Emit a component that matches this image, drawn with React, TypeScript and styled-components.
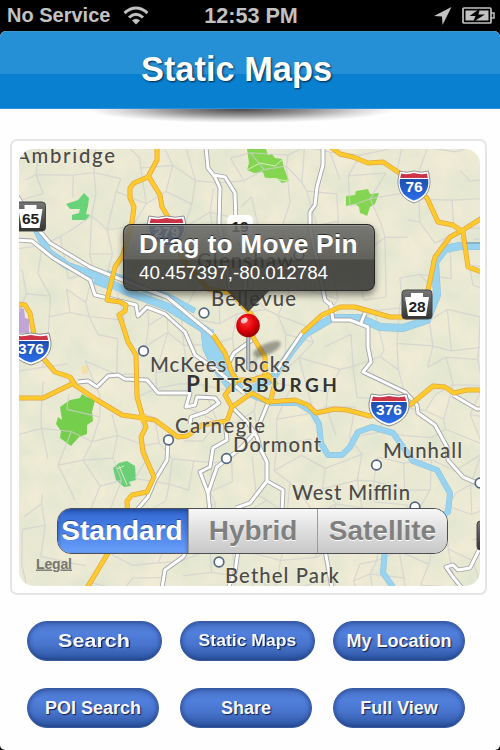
import { useState } from "react";
import styled, { createGlobalStyle } from "styled-components";

const GlobalStyle = createGlobalStyle`
  body {
    margin: 0;
    background: #000;
    font-family: "Liberation Sans", Arial, sans-serif;
  }
`;

// major highways
const highways = [
  "M157 146V160L148 177L134 183L130 188V198L134 207L132 222L123 255L115 267L107 300L120 302L126 305L125 311L119 315L122 323L128 342L136 355L137 397L143 418L146 427L141 437L143 452L154 477L147 492L132 495L127 501L128 520L108 553L87 588",
  "M149 177L160 195L162 207L170 220L182 258L208 289L230 293L252 315L253 337L265 357V380",
  "M17 304L25 305L30 313L35 340L43 358L55 372L70 377L76 386L97 400L122 415L143 418L155 420L178 437L187 436L202 425L227 421L232 407L252 393L268 402L295 400L308 405L316 413L335 409L347 410L370 416L389 413L410 405L433 386L445 387L454 393L467 390H482",
  "M17 398H43L74 383",
  "M213 335L225 353L232 373L237 380H252L268 375L275 383L270 403",
  "M237 380L225 395L232 407",
  "M302 333L322 315L340 307H355L390 317H415L428 290L435 257L450 237L463 230L482 218",
  "M331 147L340 154L353 157L368 163L383 162L398 172L427 198L438 222L453 225L463 232L468 267L482 272",
];

// secondary roads, white with a grey casing
const roads = [
  "M17 240L32 241L53 258L90 280L95 295L108 298L136 305L138 316L147 307L165 314L185 332L195 355L218 371L244 393",
  "M17 196L37 228L50 243L90 267L120 279L167 297L213 335",
  "M78 382L88 381L97 387L108 376L118 375L125 379L147 380L158 393H170L190 393L186 407L195 405L197 397L215 398L219 403L206 412L191 417L190 424",
  "M206 147L208 168L215 177L220 188L219 223L225 255L230 290",
  "M213 175L225 177L235 193L236 225L246 260L245 290",
  "M323 147V165L317 187L315 205L310 212V228L317 260L323 290L325 300L333 307",
  "M330 302L333 320H350L368 327V347L371 362L363 372L405 392L417 405L418 413L435 425L447 447L448 460L463 477L477 483",
  "M365 313L361 323",
  "M453 395L477 409H482",
  "M302 333L275 373",
  "M252 340L234 353L228 364",
  "M232 407L248 423L257 437L260 448L267 462V481L250 503L236 508",
  "M268 403L257 430L242 447L217 467L208 493",
  "M267 481L283 490L282 512",
  "M225 421L227 440L213 448L210 467L200 472L208 493L210 512",
  "M168 440L167 460L155 480L148 497L136 511",
  "M187 550L183 557L165 570L162 588",
  "M238 550L235 573L228 588",
  "M325 550L332 588",
  "M480 548L470 568L458 570L453 565L446 567L453 577L462 588",
];

const rivers = [
  { d: "M37 230L48 252L68 266L94 275L128 292L168 307L207 331L217 349L232 375L240 389", w: 7 },
  { d: "M94 281L113 288M107 273L128 280L145 290L168 296L195 311", w: 5 },
  { d: "M207 330L209 348L217 365L233 387", w: 12 },
  { d: "M245 393L272 379L292 350L305 334L332 318L360 318L380 327L403 328L427 320L437 295L435 262L445 249L460 246H482", w: 7 },
  { d: "M246 393L272 403L298 403L312 412L319 424L321 443L328 455H342L350 447L358 432L372 427L393 433L413 461L437 470L450 493L448 512L385 548L383 573L393 587", w: 5 },
];

const parks = [
  { d: "M247 149L266 149L268 155L272 154L275 158L282 159L284 168L289 181L282 183L277 178L265 178L263 172L254 173L247 170L249 163Z", fill: "#84d552" },
  { d: "M346 196L355 195L356 191L362 190L368 189L370 194L379 193L375 204L370 207L367 216L363 214L360 213L359 207L355 204L346 206Z", fill: "#84d552" },
  { d: "M70 400L80 398L82 394L87 397L95 400L92 412L93 421L87 425L87 434L79 437L71 446L60 438L61 431L56 424L58 417L62 420L60 407Z", fill: "#76cf4c" },
  { d: "M66 204L78 200L84 193L89 198L88 206L86 214L90 215L86 220L72 220L72 215L79 213L80 209L70 209Z", fill: "#69d379" },
  { d: "M113 468L119 463L127 461L135 466L136 480L129 482L131 486L124 487L116 480Z", fill: "#6bcf78" },
];

const towns = [
  [204, 313], [143.5, 351], [168.5, 440], [226.5, 458.5], [376.5, 465],
  [415, 507], [219, 562], [480, 483], [299, 255],
];

const labels = [
  { text: "Ambridge", x: 16, y: 163, w: 99 },
  { text: "Glenshaw", x: 197, y: 268, w: 96 },
  { text: "Bellevue", x: 211, y: 306, w: 85 },
  { text: "McKees Rocks", x: 150, y: 372, w: 140 },
  { text: "Carnegie", x: 175, y: 432.5, w: 90 },
  { text: "Dormont", x: 233, y: 451.5, w: 88 },
  { text: "Munhall", x: 383, y: 458, w: 79 },
  { text: "West Mifflin", x: 292, y: 500, w: 118 },
  { text: "Bethel Park", x: 225, y: 583, w: 114 },
];

const buttons = [
  { text: "Search", width: 135, size: 18, stretch: 1.2 },
  { text: "Static Maps", width: 135, size: 16, stretch: 1.1 },
  { text: "My Location", width: 132, size: 18, stretch: 1 },
  { text: "POI Search", width: 132, size: 18, stretch: 1 },
  { text: "Share", width: 132, size: 18, stretch: 1 },
  { text: "Full View", width: 132, size: 18, stretch: 1 },
];

// local streets: a jittered grid with some of the links left out
const makeStreets = () => {
  const rand = (a: number, b: number) => {
    const n = Math.sin(a * 127.1 + b * 311.7) * 43758.5453;
    return n - Math.floor(n);
  };
  const point = (i: number, j: number) =>
    `${(10 + i * 24 + rand(i, j) * 19).toFixed(1)} ${(140 + j * 24 + rand(j + 40, i) * 19).toFixed(1)}`;
  let d = "";
  for (let i = 0; i < 20; i++) {
    for (let j = 0; j < 19; j++) {
      if (rand(i + 9, j + 3) > 0.35) d += `M${point(i, j)}L${point(i + 1, j)}`;
      if (rand(i + 5, j + 71) > 0.35) d += `M${point(i, j)}L${point(i, j + 1)}`;
    }
  }
  return d;
};
const streets = makeStreets();

const Interstate = ({ x, y, w, text }: { x: number; y: number; w: number; text: string }) => (
  <g transform={`translate(${x} ${y})`}>
    <g transform={`scale(${w / 40} 1)`}>
      <path
        d="M2 0Q11 2.5 20 0Q29 2.5 38 0L40 9C41 21 32 29 20 32C8 29 -1 21 0 9Z"
        fill="#fff"
        stroke="#8c8c92"
        strokeWidth="1"
      />
      <path d="M4 2.5Q12 4 20 2Q28 4 36 2.5L37.3 7H2.7Z" fill="#cc3548" />
      <path d="M2.3 8H37.7C39.5 20 31 26.5 20 29.5C9 26.5 0.5 20 2.3 8Z" fill="url(#shield)" />
    </g>
    <ShieldText x={w / 2} y={21} fill="#fff">{text}</ShieldText>
  </g>
);

const StateRoute = ({ x, y, text }: { x: number; y: number; text: string }) => (
  <g transform={`translate(${x} ${y})`}>
    <rect width="30" height="29" rx="3.5" fill="url(#stateRoute)" stroke="#454545" />
    <path d="M9 3H21V7H27L24 26H6L3 7H9Z" fill="#fff" />
    <ShieldText x={15} y={21.5} fill="#222">{text}</ShieldText>
  </g>
);

const MapDrawing = () => (
  <MapSvg viewBox="19 149 461 437">
    <defs>
      <linearGradient id="shield" x1="0" y1="0" x2="0" y2="1">
        <stop offset="0" stopColor="#1f4fae" />
        <stop offset="1" stopColor="#2a6eea" />
      </linearGradient>
      <linearGradient id="stateRoute" x1="0" y1="0" x2="0" y2="1">
        <stop offset="0" stopColor="#777" />
        <stop offset="1" stopColor="#333" />
      </linearGradient>
      <linearGradient id="stem">
        <stop offset="0" stopColor="#777c84" />
        <stop offset="0.5" stopColor="#d0d5da" />
        <stop offset="1" stopColor="#777c84" />
      </linearGradient>
      <radialGradient id="pinHead" cx="0.42" cy="0.35" r="0.65">
        <stop offset="0" stopColor="#ff3434" />
        <stop offset="0.6" stopColor="#dc0008" />
        <stop offset="1" stopColor="#960006" />
      </radialGradient>
      <filter id="terrain" x="0" y="0" width="1" height="1" colorInterpolationFilters="sRGB">
        <feTurbulence type="fractalNoise" baseFrequency="0.035" numOctaves="4" seed="7" />
        <feColorMatrix values="0.3 0 0 0 0.765  0.1 0 0 0 0.87  0.1 0 0 0 0.78  0 0 0 0 1" />
      </filter>
      <filter id="soft">
        <feGaussianBlur stdDeviation="1.8" />
      </filter>
    </defs>
    <rect x="19" y="149" width="461" height="437" fill="#eae9d3" />
    <rect x="19" y="149" width="461" height="437" filter="url(#terrain)" opacity="0.35" />
    <path d="M19 307L24 309L25 318L29 319V333H19Z" fill="#c2a5d4" />
    {parks.map((park) => (
      <path key={park.d} d={park.d} fill={park.fill} />
    ))}
    <path d="M119 466L127 485M117 469L124 466M247 170L260 163L275 166L282 160M265 178L289 181" fill="none" stroke="#d4efb8" strokeWidth="1" />
    <path d="M82 366H88V374H82Z" fill="#f7dfa4" />
    <path d={streets} fill="none" stroke="#d0cfd0" strokeWidth="1.2" opacity="0.75" />
    {rivers.map((river) => (
      <Line key={river.d} d={river.d} stroke="#8fc3dc" strokeWidth={river.w + 1} />
    ))}
    {rivers.map((river) => (
      <Line key={river.d} d={river.d} stroke="#98d3f0" strokeWidth={river.w} />
    ))}
    {roads.map((d) => (
      <Line key={d} d={d} stroke="#a3a6a8" strokeWidth={4.8} />
    ))}
    {roads.map((d) => (
      <Line key={d} d={d} stroke="#fff" strokeWidth={3} />
    ))}
    {highways.map((d) => (
      <Line key={d} d={d} stroke="#e2a440" strokeWidth={5} />
    ))}
    {highways.map((d) => (
      <Line key={d} d={d} stroke="#ffcb2c" strokeWidth={3.6} />
    ))}
    <circle cx="143" cy="418" r="4" fill="#ffcb2c" />
    <path d="M466 243H480" stroke="#85949c" />

    {towns.map(([x, y]) => (
      <circle key={`${x}-${y}`} cx={x} cy={y} r="4.8" fill="#fff" stroke="#526781" strokeWidth="1.7" />
    ))}
    <StateRoute x={15.5} y={202} text="65" />
    <StateRoute x={402} y={290} text="28" />
    <StateRoute x={477} y={521} text="" />
    <rect x="227" y="215" width="26" height="25" rx="5" fill="#fff" />
    <ShieldText x={240} y={231.5} fill="#222">19</ShieldText>
    <Interstate x={147} y={216} w={39} text="279" />
    <Interstate x={398} y={171} w={32} text="76" />
    <Interstate x={11} y={333} w={40} text="376" />
    <Interstate x={369} y={394} w={40} text="376" />

    {labels.map((label) => (
      <TownLabel key={label.text} x={label.x} y={label.y} textLength={label.w}>
        {label.text}
      </TownLabel>
    ))}
    <CityLabel x="186" y="391.5" textLength="151">
      <tspan fontSize="22.5">P</tspan>ITTSBURGH
    </CityLabel>
    <LegalText x="36" y="568.5" textLength="36">Legal</LegalText>

    <path d="M250 367L260 354" stroke="#555" strokeWidth="2" opacity="0.35" filter="url(#soft)" />
    <ellipse cx="267" cy="349" rx="15" ry="5.5" transform="rotate(-24 267 349)" fill="#333" opacity="0.42" filter="url(#soft)" />
    <rect x="246.2" y="334" width="4" height="36" rx="1" fill="url(#stem)" />
    <circle cx="248" cy="325.5" r="11.8" fill="url(#pinHead)" />
    <ellipse cx="244" cy="320.5" rx="3.6" ry="2.6" transform="rotate(-30 244 320)" fill="#fff" opacity="0.75" />
  </MapSvg>
);

const App = () => {
  // 0: Standard, 1: Hybrid, 2: Satellite
  const [mapType, setMapType] = useState(0);

  return (
    <Screen>
      <GlobalStyle />
      <StatusBar>
        <Carrier>
          No Service
          <svg width="26" height="19" viewBox="0 0 26 19" fill="none" stroke="#c2c2c2" strokeWidth="3">
            <path d="M1.5 7Q13 -3 24.5 7M6 11.5Q13 5 20 11.5" />
            <path d="M9 14.5Q13 11 17 14.5L13 18.5Z" fill="#c2c2c2" stroke="none" />
          </svg>
        </Carrier>
        <Clock>12:53 PM</Clock>
        <StatusIcons>
          <svg width="18" height="18" viewBox="0 0 18 18">
            <path d="M17.5 0L8.5 18L8 9.5L0 9Z" fill="#c2c2c2" />
          </svg>
          <svg width="33" height="17" viewBox="0 0 33 17">
            <rect x="1" y="1" width="28" height="15" rx="1" fill="none" stroke="#c2c2c2" strokeWidth="1.7" />
            <path d="M29 6H32V11H29" fill="none" stroke="#c2c2c2" strokeWidth="1.5" />
            <rect x="3.5" y="3.5" width="23" height="10" fill="#c2c2c2" />
            <path d="M18 1.5L7.5 9H13.5L11 15L23 7.5H16.5Z" fill="#080808" />
          </svg>
        </StatusIcons>
      </StatusBar>
      <Page>
        <Header>
          <Title>Static Maps</Title>
        </Header>
        <HeaderShadow />
        <MapCard>
          <MapFrame>
            <MapDrawing />
            <Callout>
              <CalloutTitle>Drag to Move Pin</CalloutTitle>
              <Coordinates>40.457397,-80.012784</Coordinates>
            </Callout>
            <Segments>
              {["Standard", "Hybrid", "Satellite"].map((name, i) => (
                <Segment key={name} $active={mapType === i} onClick={() => setMapType(i)}>
                  {name}
                </Segment>
              ))}
            </Segments>
          </MapFrame>
        </MapCard>
        <ButtonGrid>
          {buttons.map((button) => (
            <PillButton key={button.text} $width={button.width} $size={button.size}>
              <ButtonText $stretch={button.stretch}>{button.text}</ButtonText>
            </PillButton>
          ))}
        </ButtonGrid>
      </Page>
    </Screen>
  );
};

const Screen = styled.div`
  width: 500px;
  height: 750px;
  overflow: hidden;
  background: #000;
`;

const StatusBar = styled.div`
  display: grid;
  grid-template-columns: 1fr auto 1fr;
  align-items: center;
  box-sizing: border-box;
  height: 31px;
  padding: 0 5px 0 7px;
  color: #c2c2c2;
  font-weight: bold;
`;

const Carrier = styled.div`
  display: flex;
  align-items: center;
  gap: 13px;
  font-size: 20px;
  white-space: nowrap;
`;

const Clock = styled.div`
  font-size: 21.6px;
`;

const StatusIcons = styled.div`
  display: flex;
  align-items: center;
  justify-content: flex-end;
  gap: 10px;
`;

const Page = styled.main`
  height: 719px;
  border-radius: 6px 6px 5px 5px;
  overflow: hidden;
  background: #fefefe;
`;

const Header = styled.header`
  display: flex;
  justify-content: center;
  box-sizing: border-box;
  height: 78px;
  padding: 17px 27px 0 0;
  border-top: 1px solid #3d94cc;
  border-bottom: 1px solid #2a92dc;
  background: linear-gradient(#2690d7 0 42px, #0a80d0 42px);
`;

const Title = styled.h1`
  margin: 0;
  color: #fff;
  font-size: 34.4px;
  line-height: 40px;
  text-shadow: 1px 1px 2px rgba(0, 25, 50, 0.9);
`;

const HeaderShadow = styled.div`
  width: 310px;
  height: 14px;
  margin-left: 86px;
  background: radial-gradient(
    ellipse 50% 100% at 50% 0,
    rgba(0, 0, 0, 0.72),
    rgba(0, 0, 0, 0.42) 45%,
    rgba(0, 0, 0, 0.14) 78%,
    transparent
  );
`;

const MapCard = styled.section`
  box-sizing: border-box;
  width: 477px;
  height: 456px;
  margin: 16px 0 0 10px;
  padding: 8px 7px;
  border: 2px solid #e5e5e5;
  border-radius: 7px;
  background: #fff;
`;

const MapFrame = styled.div`
  position: relative;
  width: 461px;
  height: 437px;
  overflow: hidden;
  border-radius: 15px;
`;

const MapSvg = styled.svg`
  display: block;
  width: 461px;
  height: 437px;
`;

const Line = styled.path`
  fill: none;
  stroke-linejoin: round;
`;

const TownLabel = styled.text`
  font-family: Lato, sans-serif;
  font-size: 20.3px;
  font-weight: 500;
  fill: #4b4a48;
  stroke: rgba(245, 243, 226, 0.6);
  stroke-width: 1.6px;
  paint-order: stroke;
`;

const CityLabel = styled(TownLabel)`
  font-size: 19px;
  font-weight: 700;
  fill: #333;
`;

const LegalText = styled.text`
  font-size: 14px;
  font-weight: bold;
  fill: #77766f;
  text-decoration: underline;
`;

const ShieldText = styled.text`
  font-size: 15.5px;
  font-weight: bold;
  text-anchor: middle;
`;

const Callout = styled.div`
  position: absolute;
  top: 75px;
  left: 104px;
  box-sizing: border-box;
  width: 252px;
  height: 67px;
  padding: 4px 0 0 15px;
  border: 1px solid rgba(30, 30, 30, 0.85);
  border-radius: 8px;
  color: #fff;
  background: linear-gradient(
    rgba(105, 105, 103, 0.88) 0,
    rgba(74, 74, 72, 0.85) 34px,
    rgba(50, 50, 48, 0.87) 35px,
    rgba(52, 52, 50, 0.87)
  );
  box-shadow: 0 4px 7px rgba(0, 0, 0, 0.45), inset 0 1px rgba(180, 180, 180, 0.5);

  &::after {
    content: "";
    position: absolute;
    top: 66px;
    left: 103px;
    width: 42px;
    height: 21px;
    background: rgba(50, 50, 48, 0.87);
    clip-path: polygon(0 0, 100% 0, 50% 100%);
  }
`;

const CalloutTitle = styled.div`
  font-size: 26.3px;
  font-weight: bold;
  line-height: 30px;
  letter-spacing: 0.25px;
  white-space: nowrap;
  text-shadow: 0 -1px rgba(0, 0, 0, 0.6);
`;

const Coordinates = styled.div`
  font-size: 18.8px;
  line-height: 28px;
`;

const Segments = styled.div`
  position: absolute;
  top: 359px;
  left: 38px;
  display: grid;
  grid-template-columns: 130px 129px 130px;
  box-sizing: border-box;
  width: 391px;
  height: 46px;
  overflow: hidden;
  border: 1px solid #4b4e54;
  border-radius: 14px;
`;

const Segment = styled.button<{ $active: boolean }>`
  padding: ${(props) => (props.$active ? "0 2px 0 0" : "0")};
  border: none;
  border-left: ${(props) => (props.$active ? "none" : "1px solid #9b9b9b")};
  background: ${(props) =>
    props.$active
      ? "linear-gradient(#3268cf, #477fe6 45%, #6aa0fa)"
      : "linear-gradient(#f7f7f7, #dedede 50%, #c8c8c8)"};
  box-shadow: ${(props) => (props.$active ? "inset 0 2px 4px rgba(15, 40, 100, 0.55)" : "none")};
  color: ${(props) => (props.$active ? "#fff" : "#808080")};
  font-family: inherit;
  font-size: 28px;
  font-weight: bold;
  text-shadow: ${(props) => (props.$active ? "0 -1px rgba(0, 0, 0, 0.4)" : "0 1px #fff")};
`;

const ButtonGrid = styled.nav`
  display: grid;
  grid-template-columns: 153px 153px 132px;
  row-gap: 27px;
  padding: 26px 0 0 27px;
`;

const PillButton = styled.button<{ $width: number; $size: number }>`
  display: flex;
  align-items: center;
  justify-content: center;
  width: ${(props) => props.$width}px;
  height: 40px;
  padding: 0;
  border: 1px solid #36599f;
  border-radius: 20px;
  background: linear-gradient(#4a73c9, #507fdc 30%, #4874cd 60%, #2d55a2);
  box-shadow: inset 0 0 5px rgba(20, 45, 110, 0.75);
  color: #f5f7ff;
  font-family: inherit;
  font-size: ${(props) => props.$size}px;
  font-weight: bold;
`;

const ButtonText = styled.span<{ $stretch: number }>`
  transform: scaleX(${(props) => props.$stretch});
  white-space: nowrap;
  text-shadow: 1px 1px 1px rgba(10, 25, 65, 0.9);
`;

export default App;
